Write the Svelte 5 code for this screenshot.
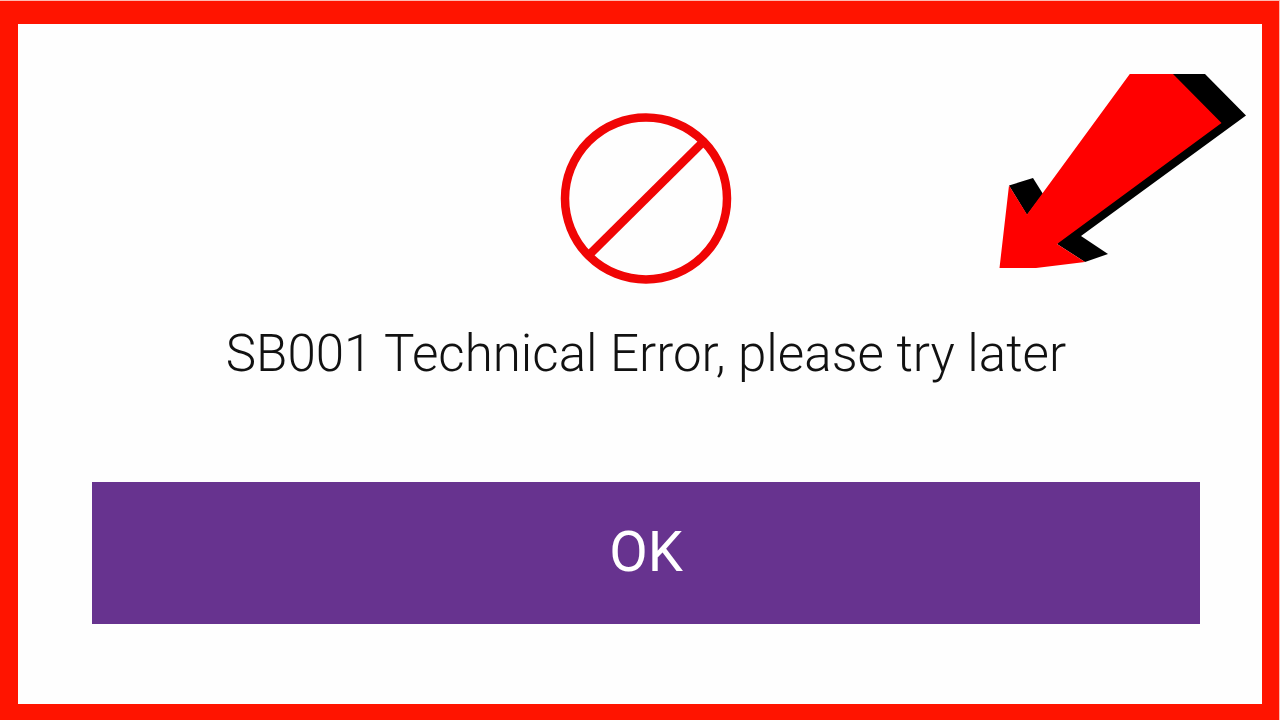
<script>
  let message = "SB001 Technical Error, please try later";
  let open = true;

  function dismiss() {
    open = false;
  }
</script>

<main class="frame">
  {#if open}
    <div class="dialog">
      <svg class="errorIcon" viewBox="0 0 172 172">
        <circle cx="86" cy="86.500" r="81" />
        <path d="M30 142L143 30" />
      </svg>
      <p class="message">{message}</p>
      <button class="okButton" on:click={dismiss}>OK</button>
    </div>
  {/if}

  <svg class="arrow" viewBox="0 0 248 196">
    <path
      d="M10 112.500L34 105L44 121L28 142ZM173 1H206L247 42.500L82 163L109 181L86 189L58 171Z"
    />
    <path
      class="arrowFace"
      d="M130.800 1H174L222.500 50L58 171L86 189L37 195H.500L10 112.500L28 141.500Z"
    />
  </svg>
</main>

<style>
  :global(body) {
    margin: 0;
    background-color: #ffb9b1;
  }

  .frame {
    position: relative;
    box-sizing: border-box;
    width: 1279px;
    height: 719px;
    margin-top: 1px;
    border: solid #ff1400;
    border-width: 23px 17px 16px 18px;
    background-color: #fefefe;
    font-family: Roboto, "Liberation Sans", sans-serif;
    overflow: hidden;
  }

  .dialog {
    display: flex;
    flex-direction: column;
    align-items: center;
    padding: 88px 62px 0 74px;
  }

  .errorIcon {
    width: 172px;
    height: 172px;
    fill: none;
    stroke: #f00505;
    stroke-width: 8.5px;
  }

  .message {
    margin: 40px 0 0;
    color: #111;
    font-size: 51.1px;
    font-weight: 300;
    line-height: 60px;
    white-space: nowrap;
  }

  .okButton {
    width: 100%;
    height: 142px;
    margin: 98px 0 0;
    padding: 0 0 2px;
    border: none;
    background-color: #67338f;
    color: white;
    font-family: inherit;
    font-size: 56px;
    font-weight: 400;
    line-height: 140px;
    cursor: pointer;
  }
  .okButton:hover {
    background-color: #5b2c80;
  }

  .arrow {
    position: absolute;
    top: 49px;
    left: 981px;
    width: 248px;
    height: 196px;
  }

  .arrowFace {
    fill: #ff0000;
  }
</style>
